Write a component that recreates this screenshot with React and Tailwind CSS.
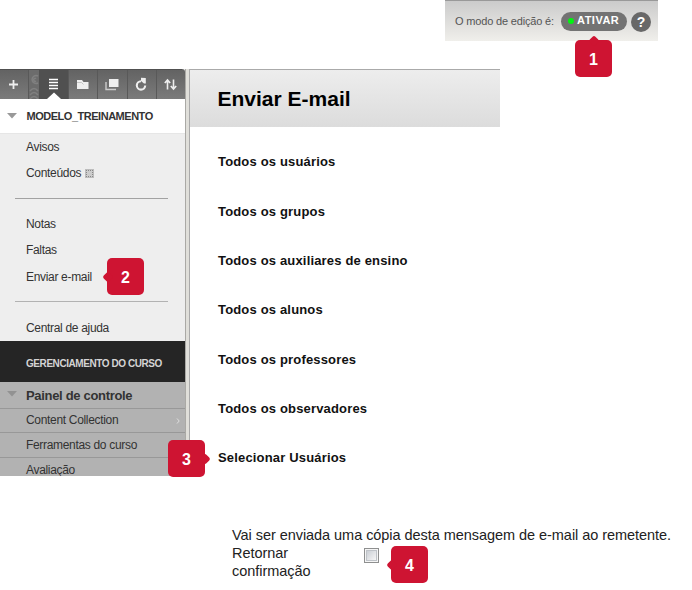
import React from "react";

const recipients = [
  "Todos os usuários",
  "Todos os grupos",
  "Todos os auxiliares de ensino",
  "Todos os alunos",
  "Todos os professores",
  "Todos os observadores",
  "Selecionar Usuários",
];

function Marker({ n, className, pointer }) {
  return (
    <div className={`absolute z-10 flex h-[37px] w-[37px] items-center justify-center rounded-[5px] bg-[#ce1432] text-[16px] font-bold text-white ${className}`}>
      <span className={`absolute h-[8px] w-[8px] rotate-45 rounded-[2px] bg-[#ce1432] ${pointer}`} />
      <span className="relative pt-[2px]">{n}</span>
    </div>
  );
}

function EditBar() {
  return (
    <header className="ml-[445px] flex h-[41px] w-[213px] items-center border-t border-[#999] bg-linear-to-b from-[#cbcbcb] to-[#f0efeb] pl-[10px] text-[11px] text-[#555]">
      <span className="w-[106px] whitespace-nowrap tracking-[-0.17px]">O modo de edição é:</span>
      <button className="flex h-[19px] w-[66px] items-center rounded-full bg-[#737373] pl-[7px] text-[11px] font-bold tracking-[0.5px] text-white">
        <i className="-mt-px mr-[3px] h-[6px] w-[6px] shrink-0 rounded-full bg-[#00f411]" />
        <span className="-mt-px">ATIVAR</span>
      </button>
      <button className="ml-[4px] mt-[2px] flex h-[20px] w-[20px] items-center justify-center rounded-full bg-[#686868] text-[14px] font-bold text-white">?</button>
    </header>
  );
}

function Toolbar() {
  return (
    <div className="h-[30px] w-[185px] overflow-hidden rounded-tr-[3px] bg-linear-to-b from-[#626262] to-[#7b7b7b]">
      <svg width="185" height="30" fill="none">
        <rect x="28" width="11" height="30" fill="#6c6c6c" />
        <g stroke="#808080" strokeWidth="1.500">
          <path d="M38 7A4 4 0 1 0 38 14M36 9.500A1.500 1.500 0 1 0 36 12" />
          <path d="M30 22Q34 17 38 22M30 26Q34 21 38 26M30 30Q34 25 38 30" />
        </g>
        <rect x="39" width="29" height="30" fill="#505050" />
        <path d="M28.500 0V30M68.500 0V30M97.500 0V30M127.500 0V30M156.500 0V30" stroke="#595959" />
        <path d="M0 .5H182" stroke="#505050" />
        <path d="M9 15.500H18M13.500 11V20" stroke="#eee" strokeWidth="1.800" />
        <path d="M49 10.500H58M49 13.500H58M49 16.500H58M49 19.500H58" stroke="#fff" strokeWidth="1.500" />
        <path d="M47 30L54 23.500L61 30Z" fill="#fff" />
        <path d="M77 11H82L83.500 13H88.500V20H77Z" fill="#eee" />
        <path d="M77 13.500H81.500L83.500 15.500" stroke="#aaa" strokeWidth=".6" />
        <path d="M109 10H118.500V18H109Z" fill="#eee" />
        <path d="M106 13V20.500H116" stroke="#ccc" strokeWidth="1.400" />
        <path d="M141 12.200A4.200 4.200 0 1 0 145.200 16.500" stroke="#eee" strokeWidth="2.100" />
        <path d="M141 8.800L145.800 9V14.500H144L141 12Z" fill="#eee" />
        <path d="M167.500 20.500V12M164.800 14L167.500 11L170.200 14M173.500 10.500V19M170.800 17L173.500 20L176.200 17" stroke="#eee" strokeWidth="1.600" />
      </svg>
    </div>
  );
}

function Triangle({ className }) {
  return (
    <svg className={className} width="10" height="6">
      <path d="M0 0H10L5 5.500Z" fill="currentColor" />
    </svg>
  );
}

function Sidebar() {
  return (
    <aside className="h-[407px] w-[185px] shrink-0 overflow-hidden bg-[#eee] text-[12px] leading-[26px] tracking-[-0.32px] text-[#333]">
      <Toolbar />
      <div className="flex h-[35px] items-center border-b border-[#e6e6e6] bg-white">
        <Triangle className="ml-[7px] mr-[9.500px] text-[#999]" />
        <strong className="whitespace-nowrap text-[11px] tracking-[-0.480px]">MODELO_TREINAMENTO</strong>
      </div>
      <nav className="pl-[26px]">
        <div className="h-[26px]">Avisos</div>
        <div className="flex h-[26px] items-center">
          Conteúdos
          <span className="ml-[4px] flex h-[9px] w-[9px] items-center justify-center bg-[#bdbdbd]">
            <i className="h-[7px] w-[7px] border border-dotted border-[#888] bg-[#ccc]" />
          </span>
        </div>
        <hr className="-ml-[11px] mb-[12px] mt-[12px] w-[153px] border-[#a2a2a2]" />
        <div className="h-[26px]">Notas</div>
        <div className="h-[27px]">Faltas</div>
        <div className="h-[26px]">Enviar e-mail</div>
        <hr className="-ml-[11px] mb-[13px] mt-[11px] w-[153px] border-[#b2b2b2]" />
        <div className="h-[26px]">Central de ajuda</div>
      </nav>
      <div className="flex h-[41px] items-center whitespace-nowrap bg-[#252525] pl-[26px] pt-[5px] text-[10px] font-bold tracking-[-0.430px] text-[#d4d4d4]">GERENCIAMENTO DO CURSO</div>
      <div className="flex h-[27px] items-center border-b border-[#989898] bg-[#b2b2b2] text-[13px] font-bold">
        <Triangle className="-mt-[3px] ml-[7px] mr-[9px] text-[#929292]" />
        <span className="pt-px">Painel de controle</span>
      </div>
      <div className="flex h-[24px] items-center border-b border-[#989898] bg-[#b2b2b2] pl-[26px]">
        <span className="-mt-px">Content Collection</span>
        <svg className="ml-auto mr-[5px]" width="4" height="6" fill="none"><path d="M1 .5L3.200 3L1 5.500" stroke="#ddd" /></svg>
      </div>
      <div className="flex h-[25px] items-center border-b border-[#989898] bg-[#b2b2b2] pl-[26px]">Ferramentas do curso</div>
      <div className="h-[20px] bg-[#b2b2b2] pl-[26px] leading-[24px]">Avaliação</div>
    </aside>
  );
}

export default function App() {
  return (
    <div className="relative h-[590px] w-[692px] overflow-hidden bg-white font-['Liberation_Sans',sans-serif]">
      <EditBar />
      <div className="mt-[28px] flex h-[407px]">
        <Sidebar />
        <div className="w-[5px] shrink-0 border-x border-l-[#aaa9a5] border-r-[#aaa] bg-[#e0dfda]" />
        <main className="w-[310px]">
          <h1 className="flex h-[58px] items-center border-t border-[#aaa] bg-linear-to-b from-[#ededed] to-[#dcdcdc] pl-[27.500px] text-[21px] font-bold text-black">Enviar E-mail</h1>
          <ul className="pl-[28px] pt-[10.500px] text-[13px] font-bold text-[#111]">
            {recipients.map((r) => (
              <li key={r} className="flex h-[49.330px] items-center whitespace-nowrap tracking-[0.170px]">{r}</li>
            ))}
          </ul>
        </main>
      </div>
      <section className="ml-[232px] mt-[50px] text-[14.500px] leading-[18px] tracking-[-0.050px] text-[#222]">
        <p className="whitespace-nowrap">Vai ser enviada uma cópia desta mensagem de e-mail ao remetente.</p>
        <label className="flex">
          <span className="w-[132px] pr-[40px]">Retornar confirmação</span>
          <span className="mt-[4px] h-[15px] w-[15px] border border-[#8e8f8f] bg-[#f5f5f5] p-[1px]">
            <i className="block h-full w-full border border-[#bfc3c8] bg-linear-to-br from-[#cbcfd5] to-[#f6f6f6]" />
          </span>
        </label>
      </section>
      <Marker n="1" className="left-[575px] top-[40px]" pointer="left-[15px] -top-[3.500px]" />
      <Marker n="2" className="left-[107px] top-[258px]" pointer="top-[15px] -left-[3.500px]" />
      <Marker n="3" className="left-[168px] top-[440px]" pointer="top-[15px] -right-[3.500px]" />
      <Marker n="4" className="left-[391px] top-[546px]" pointer="top-[15px] -left-[3.500px]" />
    </div>
  );
}
